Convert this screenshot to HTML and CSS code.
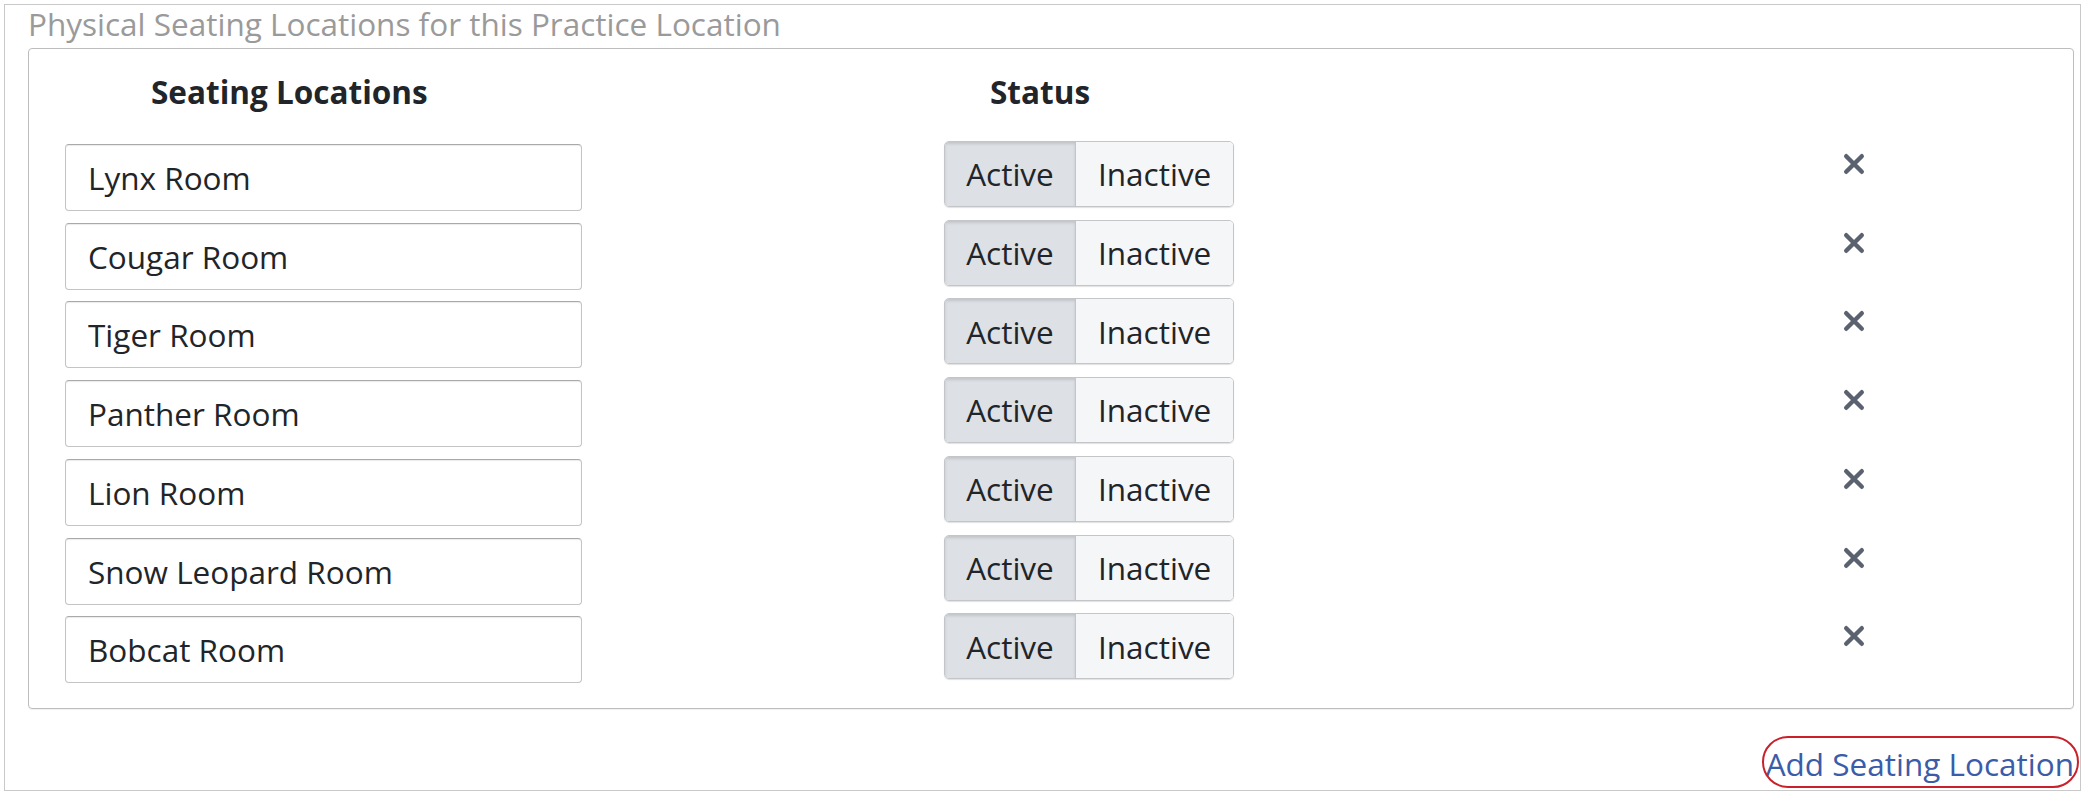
FILE: index.html
```html
<!DOCTYPE html>
<html lang="en">
<head>
<meta charset="utf-8">
<title>Physical Seating Locations</title>
<link rel="stylesheet" href="styles.css">
</head>
<body>
<div class="panel">
  <div class="panel-title">Physical Seating Locations for this Practice Location</div>
  <div class="card">
    <div class="grid">
      <div class="head head-name">Seating Locations</div>
      <div class="head head-status">Status</div>
      <div class="head"></div>

      <div class="cell"><input class="name-input" type="text" value="Lynx Room"></div>
      <div class="cell"><div class="toggle"><span class="seg seg-on">Active</span><span class="seg">Inactive</span></div></div>
      <div class="cell"><svg class="remove" viewBox="0 0 22 22"><path d="M3.2 3.2L18.8 18.8M18.8 3.2L3.2 18.8"/></svg></div>

      <div class="cell"><input class="name-input" type="text" value="Cougar Room"></div>
      <div class="cell"><div class="toggle"><span class="seg seg-on">Active</span><span class="seg">Inactive</span></div></div>
      <div class="cell"><svg class="remove" viewBox="0 0 22 22"><path d="M3.2 3.2L18.8 18.8M18.8 3.2L3.2 18.8"/></svg></div>

      <div class="cell"><input class="name-input" type="text" value="Tiger Room"></div>
      <div class="cell"><div class="toggle"><span class="seg seg-on">Active</span><span class="seg">Inactive</span></div></div>
      <div class="cell"><svg class="remove" viewBox="0 0 22 22"><path d="M3.2 3.2L18.8 18.8M18.8 3.2L3.2 18.8"/></svg></div>

      <div class="cell"><input class="name-input" type="text" value="Panther Room"></div>
      <div class="cell"><div class="toggle"><span class="seg seg-on">Active</span><span class="seg">Inactive</span></div></div>
      <div class="cell"><svg class="remove" viewBox="0 0 22 22"><path d="M3.2 3.2L18.8 18.8M18.8 3.2L3.2 18.8"/></svg></div>

      <div class="cell"><input class="name-input" type="text" value="Lion Room"></div>
      <div class="cell"><div class="toggle"><span class="seg seg-on">Active</span><span class="seg">Inactive</span></div></div>
      <div class="cell"><svg class="remove" viewBox="0 0 22 22"><path d="M3.2 3.2L18.8 18.8M18.8 3.2L3.2 18.8"/></svg></div>

      <div class="cell"><input class="name-input" type="text" value="Snow Leopard Room"></div>
      <div class="cell"><div class="toggle"><span class="seg seg-on">Active</span><span class="seg">Inactive</span></div></div>
      <div class="cell"><svg class="remove" viewBox="0 0 22 22"><path d="M3.2 3.2L18.8 18.8M18.8 3.2L3.2 18.8"/></svg></div>

      <div class="cell"><input class="name-input" type="text" value="Bobcat Room"></div>
      <div class="cell"><div class="toggle"><span class="seg seg-on">Active</span><span class="seg">Inactive</span></div></div>
      <div class="cell"><svg class="remove" viewBox="0 0 22 22"><path d="M3.2 3.2L18.8 18.8M18.8 3.2L3.2 18.8"/></svg></div>
    </div>
  </div>
  <div class="actions">
    <a class="add-link" href="#">Add Seating Location<span class="annot"></span></a>
  </div>
</div>
</body>
</html>
```

FILE: styles.css
```css
html, body {
  margin: 0;
  padding: 0;
  background: #ffffff;
}

body {
  font-family: "Open Sans", "Noto Sans", sans-serif;
  font-size: 31.5px;
  color: #212529;
}

.panel {
  margin: 4px 0 0 4px;
  width: 2077px;
  box-sizing: border-box;
  border: 1px solid #c9c9c9;
  padding: 0 6px 7px 23px;
}

.panel-title {
  line-height: 38px;
  color: #9a9a9a;
  margin-bottom: 5px;
  white-space: nowrap;
}

.card {
  border: 1px solid #bdbdbd;
  border-radius: 4px;
  padding: 24px 0 25px 0;
  box-shadow: 0 1px 1px rgba(0, 0, 0, 0.06);
}

.grid {
  display: grid;
  grid-template-columns: 915px 400px 1fr;
  row-gap: 8.75px;
  align-items: start;
}

.head {
  font-weight: 700;
  line-height: 38px;
  height: 38px;
  margin-bottom: 21px;
  white-space: nowrap;
}

.head-name {
  padding-left: 122px;
}

.head-status {
  padding-left: 46px;
}

.cell {
  height: 70px;
}

.name-input {
  display: block;
  box-sizing: border-box;
  margin: 3px 0 0 36px;
  width: 517px;
  height: 67px;
  padding: 0 22px;
  font-family: "Open Sans", "Noto Sans", sans-serif;
  font-size: 31.5px;
  color: #212529;
  background: #ffffff;
  border: 1px solid #c4c4c4;
  border-top-color: #a9a9a9;
  border-radius: 4px;
  box-shadow: inset 0 1px 1px rgba(0, 0, 0, 0.08);
  outline: none;
}

.toggle {
  display: inline-flex;
  height: 66px;
  box-sizing: border-box;
  border: 1px solid #c3c5c8;
  border-radius: 5px;
  overflow: hidden;
  box-shadow: 0 1px 1px rgba(0, 0, 0, 0.12);
}

.seg {
  display: flex;
  align-items: center;
  padding: 0 22px;
  background: #f5f6f8;
  line-height: 1;
}

.seg-on {
  width: 131px;
  box-sizing: border-box;
  justify-content: center;
  padding: 0;
  background: #dde0e4;
  border-right: 1px solid #c3c5c8;
  box-shadow: inset 0 2px 3px rgba(0, 0, 0, 0.12);
}

.remove {
  display: block;
  width: 22px;
  height: 22px;
  margin: 12px 0 0 499px;
  fill: none;
  stroke: #5a6270;
  stroke-width: 4.4;
  stroke-linecap: round;
}

.actions {
  display: flex;
  justify-content: flex-end;
  margin-top: 36px;
}

.add-link {
  position: relative;
  line-height: 38px;
  color: #3b5ca8;
  text-decoration: none;
  white-space: nowrap;
}

.annot {
  position: absolute;
  left: -4px;
  right: -5px;
  top: -9px;
  bottom: -5px;
  border: 2.5px solid #c9202a;
  border-radius: 26px / 50%;
  pointer-events: none;
}
```
